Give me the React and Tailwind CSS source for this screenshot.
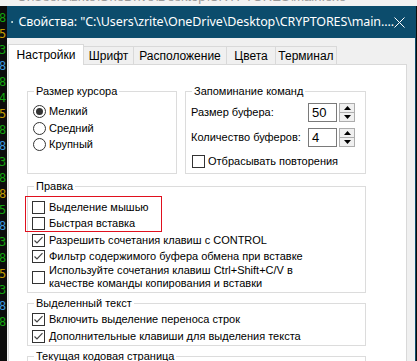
import React from "react";

function Check({ checked }) {
  return (
    <span className="w-[13px] h-[13px] border border-[#333333] bg-white flex items-center justify-center shrink-0">
      {checked && (
        <svg width="11" height="11" viewBox="0 0 11 11">
          <path d="M1.5 5.5 L4 8 L9.5 2.2" fill="none" stroke="#444" strokeWidth="1.2" />
        </svg>
      )}
    </span>
  );
}

function Radio({ checked }) {
  return (
    <span className="w-[13px] h-[13px] rounded-full border border-[#333333] bg-white flex items-center justify-center shrink-0">
      {checked && <span className="w-[7px] h-[7px] rounded-full bg-[#333333]" />}
    </span>
  );
}

function Spin({ value }) {
  return (
    <div className="flex items-center">
      <div className="w-[29px] h-[19px] border border-[#7a7a7a] bg-white pl-[3px] flex items-center text-[13px] leading-none">
        {value}
      </div>
      <div className="ml-[2px] w-[16px] h-[19px] border border-[#adadad] flex flex-col bg-[#f0f0f0]">
        <div className="flex-1 border-b border-[#adadad] flex items-center justify-center">
          <svg width="7" height="4" viewBox="0 0 7 4"><path d="M0 4 L3.5 0 L7 4Z" fill="#000" /></svg>
        </div>
        <div className="flex-1 flex items-center justify-center">
          <svg width="7" height="4" viewBox="0 0 7 4"><path d="M0 0 L3.5 4 L7 0Z" fill="#000" /></svg>
        </div>
      </div>
    </div>
  );
}

function CbRow({ checked, children, h = "h-[16px]" }) {
  return (
    <div className={`${h} flex items-center`}>
      <Check checked={checked} />
      <span className="ml-[4px] whitespace-nowrap">{children}</span>
    </div>
  );
}

function Legend({ children }) {
  return <legend className="ml-[6px] px-[2px] leading-[13px]">{children}</legend>;
}

export default function App() {
  const consoleChars = ["8", "5", "3", "8", "8", "4", "5", "8", "8", "3", "8", "8", "5", "8", "3", "8", "5", "3", "8", "8"];
  const colors = ["text-[#13a10e]", "text-[#c19c00]", "text-[#13a10e]", "text-[#3a96dd]", "text-[#13a10e]"];
  return (
    <div className="w-[417px] h-[361px] overflow-hidden flex flex-col bg-[#0c0c0c] [font-family:'Liberation_Sans',Arial,sans-serif] text-[11px] text-black">
      <div className="h-[6px] shrink-0 bg-[#f2f2f2] overflow-hidden pl-[17px]">
        <div className="-mt-[11px] text-[13px] leading-[15px] text-[#9a9a9a] whitespace-nowrap">
          C:\Users\zrite\OneDrive\Desktop\CRYPTORES\main.exe
        </div>
      </div>
      <div className="flex flex-1 min-h-0">
        <div className="w-[8px] shrink-0 overflow-hidden flex flex-col pt-[4px] [font-family:'DejaVu_Sans_Mono',monospace] text-[12px] leading-[16px] -ml-[1px]">
          {consoleChars.map((c, i) => (
            <span key={i} className={colors[i % colors.length]}>{c}</span>
          ))}
        </div>
        <div className="w-[409px] flex flex-col border-r border-[#0c4c6c] bg-[#f0f0f0]">
          <div className="h-[32px] shrink-0 bg-[#0c4c6c] flex items-center text-white">
            <svg className="ml-[4px]" width="16" height="12" viewBox="0 0 16 12">
              <rect x="0.5" y="0.5" width="15" height="11" fill="#e6e6e6" stroke="#9a9a9a" />
              <rect x="3" y="2" width="6" height="8" fill="#3d9a8e" />
              <rect x="3" y="2" width="3" height="8" fill="#8bc7d9" />
              <rect x="10" y="2" width="4" height="8" fill="#ffffff" />
            </svg>
            <span className="ml-[5px] text-[12.5px] whitespace-nowrap [font-family:'Noto_Sans',sans-serif] tracking-[-0.1px]">
              Свойства: "C:\Users\zrite\OneDrive\Desktop\CRYPTORES\main....
            </span>
            <span className="ml-auto mr-[10px] w-[12px] h-[12px] flex items-center justify-center">
              <svg width="11" height="11" viewBox="0 0 11 11">
                <path d="M0.5 0.5 L10.5 10.5 M10.5 0.5 L0.5 10.5" stroke="#fff" strokeWidth="1" />
              </svg>
            </span>
          </div>
          <div className="flex-1 flex flex-col pt-[6px] pl-[1px] min-h-0">
            <div className="flex items-end h-[20px] shrink-0">
              <div className="w-[76px] h-[21px] -mb-px relative z-10 bg-white border border-b-0 border-[#d9d9d9] flex items-center justify-center text-[12px]">
                Настройки
              </div>
              <div className="w-[50px] h-[18px] bg-[#f0f0f0] border border-l-0 border-b-0 border-[#d9d9d9] flex items-center justify-center text-[12px]">Шрифт</div>
              <div className="w-[93px] h-[18px] bg-[#f0f0f0] border border-l-0 border-b-0 border-[#d9d9d9] flex items-center justify-center text-[12px]">Расположение</div>
              <div className="w-[49px] h-[18px] bg-[#f0f0f0] border border-l-0 border-b-0 border-[#d9d9d9] flex items-center justify-center text-[12px]">Цвета</div>
              <div className="w-[61px] h-[18px] bg-[#f0f0f0] border border-l-0 border-b-0 border-[#d9d9d9] flex items-center justify-center text-[12px]">Терминал</div>
            </div>
            <div className="relative w-[399px] flex-1 bg-white border border-[#d9d9d9] pl-[18px] pt-[20px] flex flex-col">
              <div className="flex">
                <fieldset className="w-[150px] h-[89px] border border-[#dcdcdc] p-0">
                  <Legend>Размер курсора</Legend>
                  <div className="pl-[5px] pt-[5px] flex flex-col">
                    <div className="h-[17px] flex items-center"><Radio checked /><span className="ml-[3px]">Мелкий</span></div>
                    <div className="h-[16px] flex items-center"><Radio /><span className="ml-[3px]">Средний</span></div>
                    <div className="h-[16px] flex items-center"><Radio /><span className="ml-[3px]">Крупный</span></div>
                  </div>
                </fieldset>
                <fieldset className="ml-[8px] w-[181px] h-[89px] border border-[#dcdcdc] p-0">
                  <Legend>Запоминание команд</Legend>
                  <div className="pl-[5px] pt-[5px] flex flex-col">
                    <div className="h-[19px] flex items-center">
                      <span className="w-[117px] whitespace-nowrap">Размер буфера:</span>
                      <Spin value="50" />
                    </div>
                    <div className="mt-[6px] h-[19px] flex items-center">
                      <span className="w-[117px] whitespace-nowrap">Количество буферов:</span>
                      <Spin value="4" />
                    </div>
                    <div className="mt-[6px] h-[16px] flex items-center pl-[1px]">
                      <Check />
                      <span className="ml-[3px]">Отбрасывать повторения</span>
                    </div>
                  </div>
                </fieldset>
              </div>
              <fieldset className="mt-[6px] w-[339px] border border-[#dcdcdc] p-0">
                <Legend>Правка</Legend>
                <div className="pl-[4px] pt-[6px] pb-[2px] flex flex-col">
                  <CbRow h="h-[16px]">Выделение мышью</CbRow>
                  <CbRow h="h-[17px]">Быстрая вставка</CbRow>
                  <CbRow h="h-[16px]" checked>Разрешить сочетания клавиш с CONTROL</CbRow>
                  <CbRow h="h-[16px]" checked>Фильтр содержимого буфера обмена при вставке</CbRow>
                  <div className="flex items-center">
                    <Check />
                    <span className="ml-[4px] leading-[13px]">
                      Используйте сочетания клавиш Ctrl+Shift+C/V в<br />
                      качестве команды копирования и вставки
                    </span>
                  </div>
                </div>
              </fieldset>
              <fieldset className="mt-[4px] w-[339px] border border-[#dcdcdc] p-0">
                <Legend>Выделенный текст</Legend>
                <div className="pl-[4px] flex flex-col">
                  <CbRow h="h-[18px]" checked>Включить выделение переноса строк</CbRow>
                  <CbRow h="h-[17px]" checked>Дополнительные клавиши для выделения текста</CbRow>
                </div>
              </fieldset>
              <fieldset className="mt-[4px] w-[339px] h-[40px] border border-[#dcdcdc] p-0">
                <Legend>Текущая кодовая страница</Legend>
              </fieldset>
              <div className="absolute left-[16px] top-[131px] w-[137px] h-[36px] border border-[#e0101e]" />
            </div>
          </div>
        </div>
      </div>
    </div>
  );
}
